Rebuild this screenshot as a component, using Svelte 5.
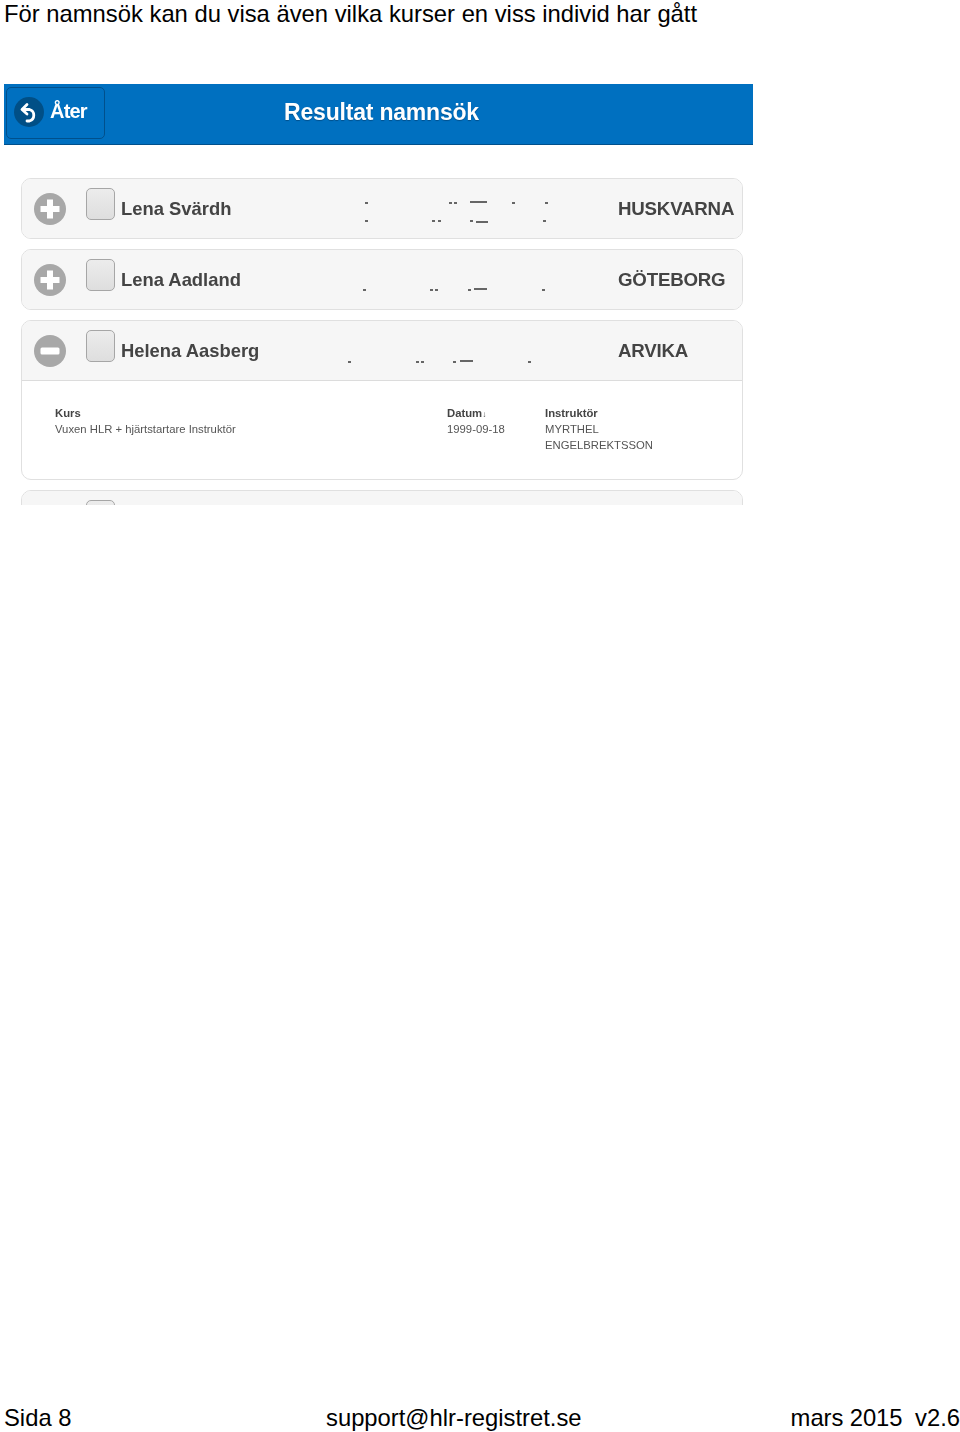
<script>
  const people = [
    {
      name: 'Lena Svärdh', city: 'HUSKVARNA', open: false,
      marks: [
        [343, 23, 3], [427, 23, 3], [432, 23, 3], [448, 22, 17], [490, 23, 3], [523, 23, 3],
        [343, 41, 3], [410, 41, 3], [416, 41, 3], [448, 41, 3], [454, 42, 12], [521, 41, 3]
      ]
    },
    {
      name: 'Lena Aadland', city: 'GÖTEBORG', open: false,
      marks: [[341, 39, 3], [408, 39, 3], [413, 39, 3], [446, 39, 3], [452, 38, 13], [520, 39, 3]]
    },
    {
      name: 'Helena Aasberg', city: 'ARVIKA', open: true,
      marks: [[326, 40, 3], [394, 40, 3], [399, 40, 3], [431, 40, 3], [438, 39, 13], [506, 40, 3]]
    },
    { name: '', city: '', open: false, marks: [] }
  ];
</script>

<div class="page">
  <h1>För namnsök kan du visa även vilka kurser en viss individ har gått</h1>

  <section class="shot">
    <header class="bar">
      <button class="back" type="button">
        <span class="back-icon">
          <svg viewBox="0 0 30 30" width="30" height="30" aria-hidden="true">
            <path d="M9 12.5h6.5a6 6 0 0 1 0 11.5H13" fill="none" stroke="#fff" stroke-width="2.8" stroke-linecap="round" />
            <path d="M13 7.5 8 12.5l5 4.5" fill="none" stroke="#fff" stroke-width="2.8" stroke-linecap="round" stroke-linejoin="round" />
          </svg>
        </span>
        <span class="back-text">Åter</span>
      </button>
      <h2>Resultat namnsök</h2>
    </header>

    <div class="list">
      {#each people as p}
        <article class="card">
          <div class="row">
            <span class="toggle">
              <svg viewBox="0 0 32 32" width="32" height="32" aria-hidden="true">
                <circle cx="16" cy="16" r="16" fill="#a8a8a8" />
                {#if p.open}
                  <rect x="6.5" y="12.5" width="19" height="7" rx="1.5" fill="#fff" />
                {:else}
                  <path d="M13 6.5h6v6.5h6.5v6H19v6.5h-6V19H6.5v-6H13z" fill="#fff" />
                {/if}
              </svg>
            </span>
            <span class="check"></span>
            <span class="name">{p.name}</span>
            <span class="city">{p.city}</span>
            {#each p.marks as [x, y, w]}
              <i class="mark" style="left:{x}px;top:{y}px;width:{w}px"></i>
            {/each}
          </div>
          {#if p.open}
            <div class="detail">
              <div>
                <b>Kurs</b>
                <p>Vuxen HLR + hjärtstartare Instruktör</p>
              </div>
              <div>
                <b>Datum<small>↓</small></b>
                <p>1999-09-18</p>
              </div>
              <div>
                <b>Instruktör</b>
                <p>MYRTHEL ENGELBREKTSSON</p>
              </div>
            </div>
          {/if}
        </article>
      {/each}
    </div>
  </section>

  <footer>
    <span>Sida 8</span>
    <span>support@hlr-registret.se</span>
    <span class="ver">mars 2015&nbsp;&nbsp;v2.6</span>
  </footer>
</div>

<style>
  :global(body) { background: #fff; }
  .page {
    box-sizing: border-box;
    width: 960px;
    height: 1432px;
    display: flex;
    flex-direction: column;
    font-family: "Liberation Sans", Arial, sans-serif;
    color: #000;
  }
  h1 {
    margin: 0 0 0 4px;
    font-size: 23.8px;
    font-weight: 400;
    line-height: 27px;
    height: 84px;
  }
  .shot {
    margin-left: 4px;
    width: 749px;
    height: 421px;
    overflow: hidden;
  }
  .bar {
    box-sizing: border-box;
    position: relative;
    height: 61px;
    background: #0070c0;
    border-bottom: 1px solid #00508c;
    display: flex;
    align-items: center;
    justify-content: center;
    padding: 0 0 4px 6px;
  }
  .bar h2 {
    margin: 0;
    font-size: 23px;
    font-weight: 700;
    color: #fff;
    text-shadow: 0 1px 1px #00508c;
    letter-spacing: -0.2px;
    filter: blur(0.4px);
  }
  .back {
    position: absolute;
    left: 2px;
    top: 3px;
    box-sizing: border-box;
    width: 99px;
    height: 52px;
    padding: 0 0 4px 7px;
    display: flex;
    align-items: center;
    gap: 6px;
    background: #0070c0;
    border: 1px solid #00508c;
    border-radius: 5px;
    color: #fff;
    font: 700 20px "Liberation Sans", Arial, sans-serif;
    letter-spacing: -0.8px;
  }
  .back-text { filter: blur(0.4px); }
  .back-icon {
    width: 30px;
    height: 30px;
    margin-top: 2px;
    border-radius: 50%;
    background: #004f86;
    display: block;
  }
  .back-icon svg { display: block; }
  .list {
    box-sizing: border-box;
    padding: 33px 10px 0 17px;
    display: flex;
    flex-direction: column;
    gap: 10px;
  }
  .card {
    border: 1px solid #e0e0e0;
    border-radius: 10px;
    background: #fff;
    overflow: hidden;
  }
  .row {
    box-sizing: border-box;
    position: relative;
    height: 59px;
    padding-left: 12px;
    background: #f6f6f6;
    display: grid;
    grid-template-columns: 52px 35px 497px 1fr;
    align-items: center;
    color: #444;
    font-weight: 700;
  }
  .toggle { display: block; height: 32px; }
  .toggle svg { display: block; }
  .check {
    box-sizing: border-box;
    width: 29px;
    height: 32px;
    margin-top: -10px;
    border: 1px solid #a6a6a6;
    border-radius: 5px;
    background: linear-gradient(#ececec, #dedede);
  }
  .name, .city { white-space: nowrap; filter: blur(0.4px); }
  .name { font-size: 18.4px; }
  .city { font-size: 18.7px; letter-spacing: -0.2px; }
  .mark {
    position: absolute;
    height: 2px;
    background: #666;
  }
  .detail {
    box-sizing: border-box;
    height: 99px;
    border-top: 1px solid #dcdcdc;
    padding: 24px 0 0 33px;
    display: grid;
    grid-template-columns: 392px 98px 125px;
    font-size: 11.3px;
    line-height: 16px;
    color: #555;
    filter: blur(0.4px);
  }
  .detail b { display: block; color: #444; }
  .detail small { font-size: 8px; font-weight: 400; line-height: 0; }
  .detail p { margin: 0; }
  footer {
    margin-top: auto;
    display: grid;
    grid-template-columns: 322px 1fr auto;
    padding: 0 0 0 4px;
    font-size: 23.8px;
    line-height: 27px;
    height: 28px;
  }
  .ver { word-spacing: -0.4px; }
</style>
